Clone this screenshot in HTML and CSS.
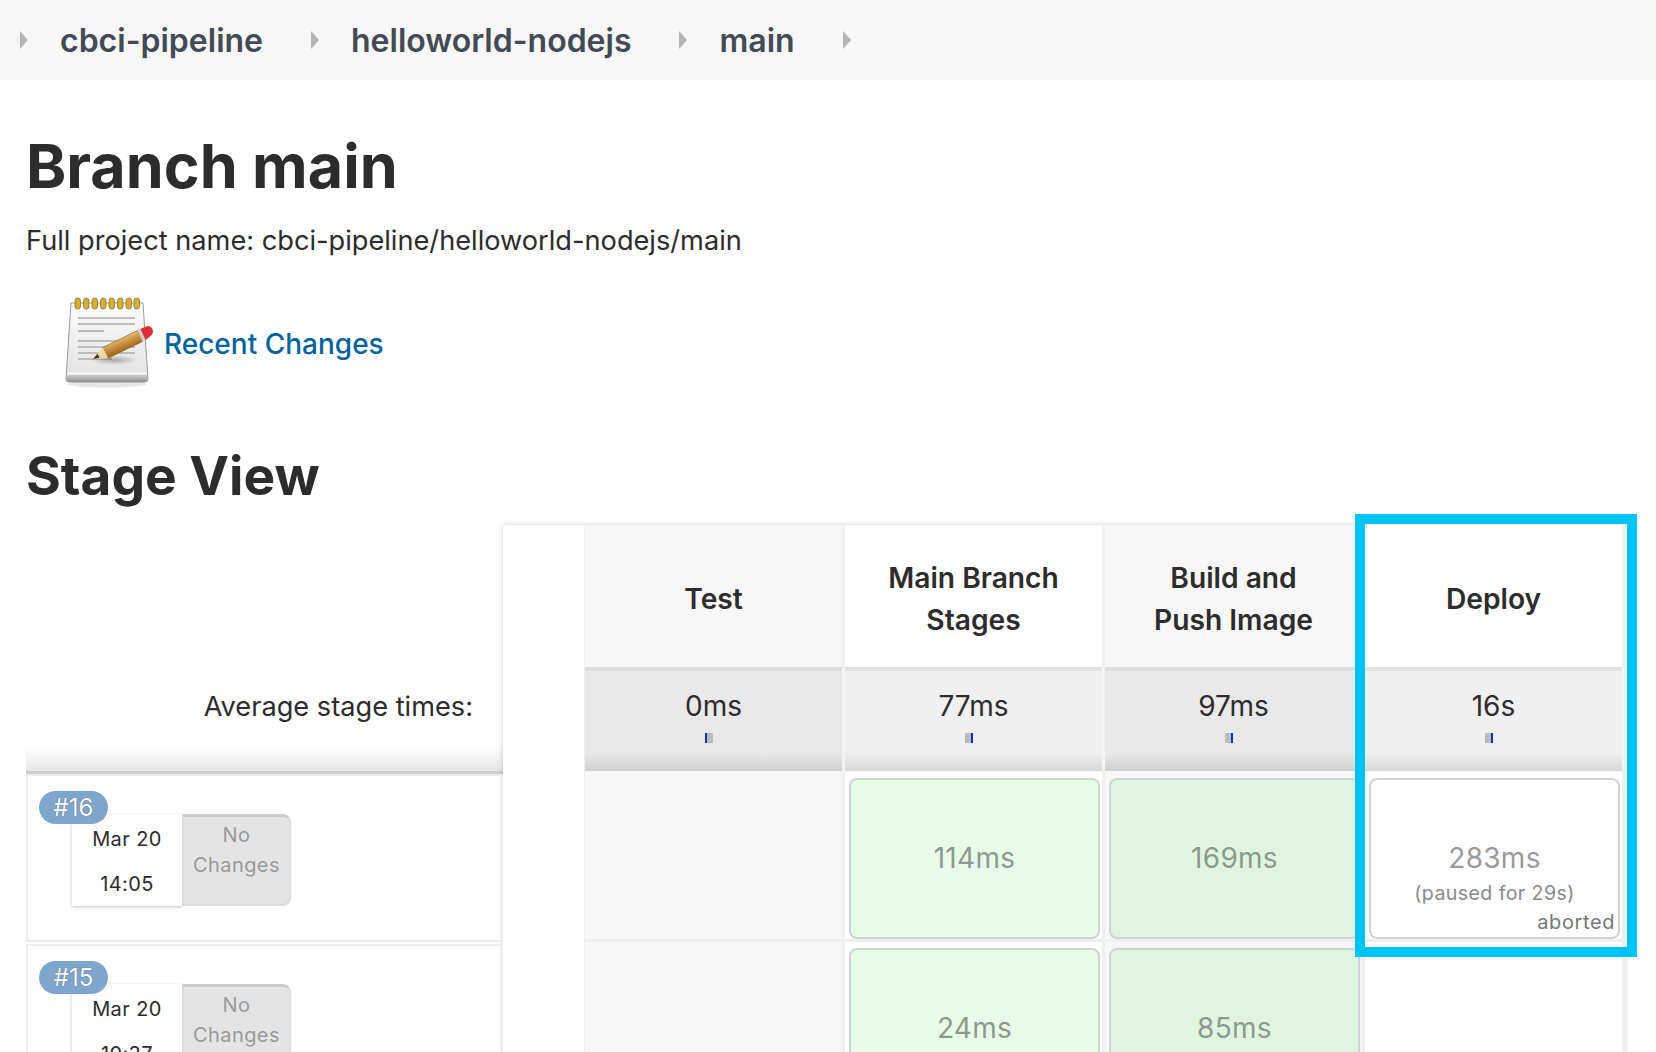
FILE: index.html
```html
<!DOCTYPE html>
<html lang="en">
<head>
<meta charset="UTF-8" />
<meta name="viewport" content="width=device-width, initial-scale=1" />
<title>Branch main</title>
<link rel="stylesheet" href="styles.css">
</head>
<body>

  <!-- Breadcrumbs -->
  <nav class="breadcrumbs">
    <span class="crumb-arrow"></span>
    <a class="crumb">cbci-pipeline</a>
    <span class="crumb-arrow"></span>
    <a class="crumb">helloworld-nodejs</a>
    <span class="crumb-arrow"></span>
    <a class="crumb">main</a>
    <span class="crumb-arrow"></span>
  </nav>

  <main class="content">
    <h1>Branch main</h1>
    <p class="project-name">Full project name: cbci-pipeline/helloworld-nodejs/main</p>

    <div class="recent-changes">
      <svg class="notepad" viewBox="0 0 96 96" width="96" height="96" aria-hidden="true">
        <defs>
          <linearGradient id="paper" x1="0" y1="0" x2="0" y2="1">
            <stop offset="0" stop-color="#fbfbfb" />
            <stop offset="1" stop-color="#e2e2e2" />
          </linearGradient>
          <linearGradient id="wood" gradientUnits="userSpaceOnUse" x1="58" y1="42" x2="63" y2="54">
            <stop offset="0" stop-color="#f0bf72" />
            <stop offset="1" stop-color="#a96c1c" />
          </linearGradient>
          <linearGradient id="band" x1="0" y1="0" x2="0" y2="1">
            <stop offset="0" stop-color="#cfcfcf" />
            <stop offset="1" stop-color="#8e8e8e" />
          </linearGradient>
          <radialGradient id="pencilShadow">
            <stop offset="0" stop-color="#000" stop-opacity=".28" />
            <stop offset="1" stop-color="#000" stop-opacity="0" />
          </radialGradient>
        </defs>
        <ellipse cx="45" cy="89" rx="40" ry="3.500" fill="#000" opacity=".1" />
        <path d="M9 8 H81 L86 84 Q86 87 83 87 H7 Q4 87 4 84 Z" fill="url(#paper)" stroke="#9a9a9a" stroke-width="1" />
        <path d="M4.500 80 H85.500 V84 Q85.500 87 83 87 H7 Q4.500 87 4.500 84 Z" fill="url(#band)" />
        <path d="M5 78.500 H85" stroke="#f7f7f7" stroke-width="1.500" />
        <g stroke="#bcbcbc" stroke-width="2">
          <path d="M16 23 H73" />
          <path d="M16 29 H73" />
          <path d="M16 36 H42" />
          <path d="M16 46 H73" />
          <path d="M16 52 H73" />
          <path d="M16 58 H73" />
          <path d="M16 64 H50" />
        </g>
        <g fill="#d6ae35" stroke="#8a7326" stroke-width=".8">
          <rect x="13" y="3" width="5.500" height="11" rx="2.750" />
          <rect x="21.500" y="3" width="5.500" height="11" rx="2.750" />
          <rect x="30" y="3" width="5.500" height="11" rx="2.750" />
          <rect x="38.500" y="3" width="5.500" height="11" rx="2.750" />
          <rect x="47" y="3" width="5.500" height="11" rx="2.750" />
          <rect x="55.500" y="3" width="5.500" height="11" rx="2.750" />
          <rect x="64" y="3" width="5.500" height="11" rx="2.750" />
          <rect x="72" y="3" width="5.500" height="11" rx="2.750" />
        </g>
        <ellipse cx="52" cy="65" rx="24" ry="5" fill="url(#pencilShadow)" />
        <path d="M41 52.400 L75.400 35.600 L80.600 46.400 L46.200 63.200 Z" fill="url(#wood)" stroke="#86581a" stroke-width=".6" />
        <path d="M31 64 L41 52.400 L46.200 63.200 Z" fill="#eed6ab" />
        <path d="M31 64 L35.500 58.800 L37.500 62.800 Z" fill="#46361c" />
        <path d="M75.400 35.600 L78.400 34.100 L83.600 44.900 L80.600 46.400 Z" fill="#cfcfcf" />
        <path d="M78.400 34.100 L84 31.400 Q88.500 29.800 90.500 34 Q92 38.500 88.500 41 L83.600 44.900 Z" fill="#dc3037" />
      </svg>
      <a class="recent-link">Recent Changes</a>
    </div>

    <h2>Stage View</h2>

    <div class="stage-view">
      <div class="builds">
        <div class="avg-label"><span>Average stage times:</span></div>

        <div class="build-row">
          <span class="build-badge">#16</span>
          <div class="build-info">
            <div class="build-date"><span>Mar 20</span><span>14:05</span></div>
            <div class="build-changes">No Changes</div>
          </div>
        </div>

        <div class="build-row">
          <span class="build-badge">#15</span>
          <div class="build-info">
            <div class="build-date"><span>Mar 20</span><span>10:37</span></div>
            <div class="build-changes">No Changes</div>
          </div>
        </div>
      </div>

      <div class="stage-table">
        <!-- headers -->
        <div class="blank-col"></div>
        <div class="stage-head odd">Test</div>
        <div class="stage-head">Main Branch Stages</div>
        <div class="stage-head odd">Build and Push Image</div>
        <div class="stage-head">Deploy</div>

        <!-- averages -->
        <div class="blank-col"></div>
        <div class="stage-avg odd"><span>0ms</span><i class="avg-bar bar-left"></i></div>
        <div class="stage-avg"><span>77ms</span><i class="avg-bar"></i></div>
        <div class="stage-avg odd"><span>97ms</span><i class="avg-bar"></i></div>
        <div class="stage-avg"><span>16s</span><i class="avg-bar"></i></div>

        <!-- #16 -->
        <div class="blank-col"></div>
        <div class="stage-cell odd"></div>
        <div class="stage-cell"><div class="card card-ok">114ms</div></div>
        <div class="stage-cell odd"><div class="card card-ok">169ms</div></div>
        <div class="stage-cell">
          <div class="card card-aborted">
            <span>283ms</span>
            <small class="paused">(paused for 29s)</small>
            <small class="aborted">aborted</small>
          </div>
        </div>

        <!-- #15 -->
        <div class="blank-col"></div>
        <div class="stage-cell odd"></div>
        <div class="stage-cell"><div class="card card-ok">24ms</div></div>
        <div class="stage-cell odd"><div class="card card-ok">85ms</div></div>
        <div class="stage-cell"></div>
      </div>

      <!-- highlight drawn over the Deploy column -->
      <div class="highlight"></div>
    </div>
  </main>

</body>
</html>
```

FILE: styles.css
```css
html, body {
  margin: 0;
  height: 1052px;
  overflow: hidden;
  background: #fff;
}
body {
  font-family: Inter, "Liberation Sans", sans-serif;
  color: #2c2c2c;
}

/* breadcrumbs */
.breadcrumbs {
  display: flex;
  align-items: center;
  height: 80px;
  padding-left: 20px;
  background: #f7f7f7;
}
.crumb {
  font-size: 32px;
  font-weight: 600;
  color: #434a54;
  margin: 0 48px 0 32px;
}
.crumb-arrow {
  width: 0;
  height: 0;
  border-left: 8px solid #b5b5b5;
  border-top: 9px solid transparent;
  border-bottom: 9px solid transparent;
}

/* page head */
.content {
  padding: 0 0 0 26px;
}
h1 {
  margin: 48px 0 0;
  font-size: 61px;
  line-height: 76px;
  font-weight: 700;
}
.project-name {
  margin: 17px 0 0;
  font-size: 27.2px;
  line-height: 40px;
}
.recent-changes {
  display: flex;
  align-items: center;
  margin: 32px 0 0 36px;
  height: 100px;
}
.notepad {
  flex: none;
}
.recent-link {
  margin: 2px 0 0 6px;
  font-size: 28px;
  font-weight: 500;
  color: #00639c;
}
h2 {
  margin: 49px 0 0;
  font-size: 53.2px;
  line-height: 68px;
  font-weight: 700;
}

/* stage view */
.stage-view {
  position: relative;
  display: flex;
  margin-top: 15px;
}
.builds {
  width: 477px;
  flex: none;
}
.avg-label {
  height: 249px;
  box-sizing: border-box;
  display: flex;
  align-items: flex-end;
  justify-content: flex-end;
  padding: 0 30px 44px 0;
  font-size: 27.2px;
  line-height: 40px;
  border-bottom: 3px solid #cccccc;
  background: linear-gradient(to bottom, #fff 222px, #e6e6e6 246px);
}
.build-row {
  position: relative;
  height: 168px;
  margin-bottom: 2px;
  box-sizing: border-box;
  padding: 38px 0 0 44px;
  border: 2px solid #ececec;
}
.build-badge {
  position: absolute;
  left: 11px;
  top: 15px;
  z-index: 1;
  width: 69px;
  height: 33px;
  border-radius: 17px;
  background: #7ea6cd;
  color: #fff;
  font-size: 24px;
  line-height: 33px;
  text-align: center;
  text-shadow: 0 0 1px #444;
}
.build-info {
  display: flex;
  height: 92px;
}
.build-date {
  width: 110px;
  box-sizing: border-box;
  display: flex;
  flex-direction: column;
  justify-content: space-between;
  align-items: center;
  padding: 12px 0 9px;
  background: #fff;
  box-shadow: 0 1px 3px rgba(0,0,0,0.25);
  font-size: 20px;
  line-height: 26px;
  letter-spacing: 0.4px;
}
.build-changes {
  width: 109px;
  box-sizing: border-box;
  padding-top: 3px;
  background: #e4e4e4;
  border: 2px solid #dcdcdc;
  border-top: 3px solid #cbcbcb;
  border-radius: 0 8px 8px 0;
  color: #9a9a9a;
  font-size: 20px;
  line-height: 30px;
  text-align: center;
  letter-spacing: 0.4px;
}

.stage-table {
  display: grid;
  grid-template-columns: 82px repeat(4, 260px);
  grid-template-rows: 142px 105px 170px 170px;
  width: 1122px;
  flex: none;
  box-shadow: 0 0 5px rgba(120,130,145,0.4);
}
.blank-col {
  background: #fff;
  border-right: 1px solid #eee;
}
.stage-head {
  display: flex;
  align-items: center;
  justify-content: center;
  padding: 6px 35px 0;
  box-sizing: border-box;
  text-align: center;
  font-size: 28.2px;
  line-height: 42px;
  font-weight: 600;
  background: #fff;
  border-right: 3px solid #f0f0f0;
}
.stage-head.odd {
  background: #f7f7f7;
}
.stage-avg {
  display: flex;
  flex-direction: column;
  align-items: center;
  padding-top: 19px;
  box-sizing: border-box;
  font-size: 28px;
  line-height: 40px;
  background: linear-gradient(to bottom, #e2e2e2 4px, #f0f0f0 4px, #f0f0f0 86px, #d8d8d8 104px, #f7f7f7 104px);
  border-right: 3px solid #f3f3f3;
}
.stage-avg.odd {
  background: linear-gradient(to bottom, #dcdcdc 4px, #e9e9e9 4px, #e9e9e9 86px, #cfcfcf 104px, #f7f7f7 104px);
}
.avg-bar {
  display: block;
  width: 8px;
  height: 10px;
  margin: 7px 10px 0 0;
  background: linear-gradient(to right, #bbb 6px, #0a2fc4 6px);
}
.avg-bar.bar-left {
  background: linear-gradient(to right, #0a2fc4 2px, #bbb 2px);
}
.stage-cell {
  box-sizing: border-box;
  padding: 6px 2px 0 4px;
  background: #fff;
  border-right: 3px solid #f0f0f0;
  border-bottom: 3px solid #efefef;
}
.stage-cell.odd {
  background: #f7f7f7;
}
.card {
  position: relative;
  box-sizing: border-box;
  height: 100%;
  display: flex;
  flex-direction: column;
  align-items: center;
  justify-content: center;
  padding-bottom: 2px;
  border: 2px solid #ced4d6;
  border-radius: 8px;
  color: #8b9a8e;
  font-size: 28px;
  line-height: 40px;
  letter-spacing: 0.3px;
}
.card-ok {
  background: #e8fde8;
}
.odd .card-ok {
  background: #e0f5e1;
}
.card-aborted {
  justify-content: flex-start;
  padding-top: 58px;
  background: #fff;
  color: #9a9a9a;
}
.card-aborted small {
  font-size: 19.6px;
  color: #8a8a8a;
  letter-spacing: 0.4px;
}
.paused {
  line-height: 30px;
}
.card-aborted .aborted {
  position: absolute;
  right: 3px;
  bottom: 2px;
  font-size: 20px;
  line-height: 26px;
  letter-spacing: 0.6px;
  color: #777;
}

/* annotation over the Deploy column */
.highlight {
  position: absolute;
  left: 1329px;
  top: -11px;
  width: 282px;
  height: 443px;
  box-sizing: border-box;
  border: 10px solid #00c3fb;
  pointer-events: none;
}
```
